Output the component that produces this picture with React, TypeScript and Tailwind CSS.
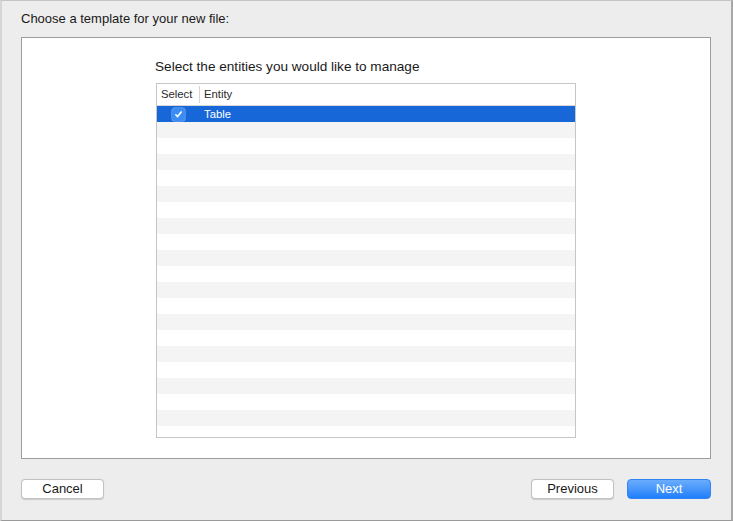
import React from 'react';

const ROWS = 21;

// Small macOS-style checkbox, checked
const Check = () => (
  <span className="flex h-[13px] w-[13px] items-center justify-center rounded-[3px] bg-[#3b8cf5] shadow-[0_0_0_0.5px_rgba(255,255,255,0.5)]">
    <svg width="9" height="9" viewBox="0 0 9 9" fill="none">
      <path d="M1.8 4.8 L3.6 6.6 L7.2 2" stroke="white" strokeWidth="1.6" strokeLinecap="round" strokeLinejoin="round" />
    </svg>
  </span>
);

const App: React.FC = () => {
  return (
    <div
      className="relative flex h-[521px] w-[733px] flex-col overflow-hidden border-t border-t-[#c4c4c4] border-r-2 border-r-[#a8a8a8] border-b border-b-[#9a9a9a] border-l-2 border-l-[#d6d6d6] bg-[#ededed] text-[#1a1a1a]"
      style={{ fontFamily: '"Liberation Sans", Arial, sans-serif' }}
    >
      {/* Title */}
      <div className="pl-[19px] pt-[10px] text-[13px] leading-[16px]">Choose a template for your new file:</div>

      {/* Content panel */}
      <div className="ml-[19px] mt-[10px] flex h-[422px] w-[690px] flex-col items-start border border-[#9c9c9c] bg-white pl-[133px]">
        <div className="mt-[21px] text-[13.6px] leading-[16px]">Select the entities you would like to manage</div>

        <div className="ml-[1px] mt-[8px] flex h-[355px] w-[420px] flex-col overflow-hidden border border-[#c6c6c6]">
          {/* Header */}
          <div className="flex h-[22px] shrink-0 items-center border-b border-[#d8d8d8] text-[11.3px] text-[#2a2a2a]">
            <div className="flex h-[17px] w-[43px] items-center border-r border-[#d4d4d4] pl-[4px]">Select</div>
            <div className="pl-[4px]">Entity</div>
          </div>

          {/* Rows */}
          <div className="flex flex-col">
            <div className="flex h-[16px] items-center bg-[#1767d9] text-[11.3px] text-white">
              <div className="flex w-[43px] justify-center">
                <Check />
              </div>
              <div className="pl-[4px]">Table</div>
            </div>
            {Array.from({ length: ROWS }).map((_, i) => (
              <div key={i} className={i % 2 === 0 ? 'h-[16px] shrink-0 bg-[#f4f4f4]' : 'h-[16px] shrink-0 bg-white'} />
            ))}
          </div>
        </div>
      </div>

      {/* Footer buttons */}
      <div className="mt-[20px] flex items-center pl-[19px] pr-[20px] text-[13px]">
        <button className="h-[20px] w-[83px] rounded-[4px] border border-[#c2c2c2] bg-white leading-[18px] shadow-[0_0.5px_1px_rgba(0,0,0,0.15)]">
          Cancel
        </button>
        <div className="flex-1" />
        <button className="h-[20px] w-[83px] rounded-[4px] border border-[#c2c2c2] bg-white leading-[18px] shadow-[0_0.5px_1px_rgba(0,0,0,0.15)]">
          Previous
        </button>
        <button className="ml-[13px] h-[20px] w-[84px] rounded-[4px] border border-[#2f83f4] bg-gradient-to-b from-[#6aadfc] to-[#1d7ffb] leading-[18px] text-white">
          Next
        </button>
      </div>
    </div>
  );
};

export default App;
